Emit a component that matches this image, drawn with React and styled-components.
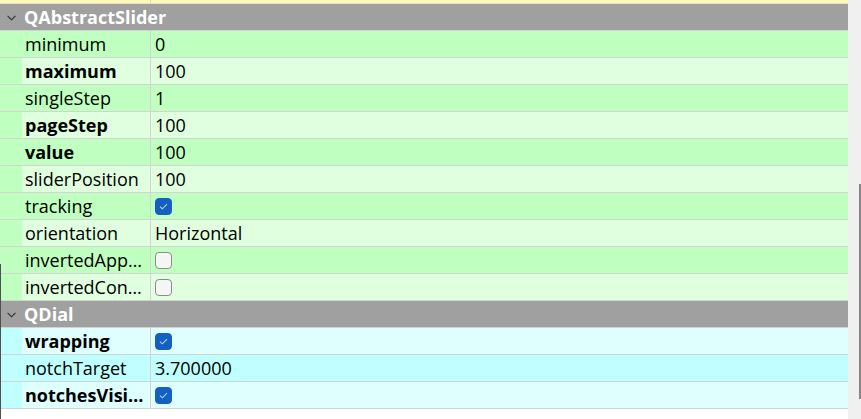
import React from "react";
import styled, { createGlobalStyle } from "styled-components";

const Global = createGlobalStyle`
  html, body { margin: 0; padding: 0; background: #ffffff; }
  body { font-family: "Open Sans", "Noto Sans", "Liberation Sans", sans-serif; }
`;

const Page = styled.div`
  position: relative;
  display: flex;
  width: 861px;
  height: 419px;
  overflow: hidden;
  background: #ffffff;
`;

const EdgeLine = styled.div`
  position: absolute;
  left: 0;
  top: 264px;
  width: 1px;
  bottom: 0;
  background: #505050;
`;

const Tree = styled.div`
  width: 848px;
  display: flex;
  flex-direction: column;
`;

const ScrollTrack = styled.div`
  width: 13px;
  background: #f0f0f0;
  display: flex;
  flex-direction: column;
  align-items: flex-end;
  padding-top: 184px;
  box-sizing: border-box;
`;

const Thumb = styled.div`
  width: 2px;
  height: 215px;
  background: #868686;
`;

const TopStrip = styled.div`
  height: 3px;
  display: grid;
  grid-template-columns: 151px 1fr;
  background: #fff8b4;
  border-bottom: 1px solid #e4e4d0;
`;

const StripCell = styled.div`
  border-right: ${(p) => (p.$divider ? "1px solid #d8d8c0" : "none")};
`;

const GroupHeader = styled.div`
  height: 26px;
  display: flex;
  align-items: center;
  gap: 8px;
  padding-left: 7px;
  background: #a0a0a0;
  border-bottom: 1px solid #d3d3d3;
  border-left: 1px solid #6a6a6a;
  box-sizing: content-box;
  color: #ffffff;
  font-weight: 700;
  font-size: 18px;
  line-height: 26px;
  margin-left: -1px;
`;

const Chevron = styled.svg`
  width: 9px;
  height: 6px;
  flex: none;
  margin-top: 2px;
`;

const Row = styled.div`
  height: 26px;
  display: grid;
  grid-template-columns: 22px 128px 1px 1fr;
  border-bottom: 1px solid #d3d3d3;
  background: ${(p) => p.$bg};
`;

const Branch = styled.div`
  background: ${(p) => p.$bg};
`;

const NameCell = styled.div`
  padding-left: 3px;
  font-size: 18px;
  line-height: 26px;
  font-weight: ${(p) => (p.$bold ? 700 : 400)};
  color: #000000;
  white-space: nowrap;
  overflow: hidden;
`;

const Divider = styled.div`
  background: #d3d3d3;
`;

const ValueCell = styled.div`
  padding-left: 4px;
  font-size: 18px;
  line-height: 26px;
  color: #000000;
  white-space: nowrap;
  display: flex;
  align-items: center;
`;

const Box = styled.div`
  width: 17px;
  height: 17px;
  box-sizing: border-box;
  border-radius: 4px;
  display: flex;
  align-items: center;
  justify-content: center;
  background: ${(p) => (p.$checked ? "#135fc2" : "#f5f5f5")};
  border: 1px solid ${(p) => (p.$checked ? "#135fc2" : "#8c8c8c")};
`;

const Check = styled.svg`
  width: 9px;
  height: 7px;
`;

const CheckBox = ({ checked }) => (
  <Box $checked={checked}>
    {checked && (
      <Check viewBox="0 0 9 7">
        <path d="M1 3.6 L3.4 5.8 L8 1.2" fill="none" stroke="#b9d3f2" strokeWidth="1.1" />
      </Check>
    )}
  </Box>
);

const palettes = {
  green: { dark: "#bfffbf", light: "#dfffdf" },
  cyan: { dark: "#bfffff", light: "#dfffff" },
};

const groups = [
  {
    title: "QAbstractSlider",
    palette: "green",
    startDark: true,
    rows: [
      { name: "minimum", value: "0" },
      { name: "maximum", value: "100", bold: true },
      { name: "singleStep", value: "1" },
      { name: "pageStep", value: "100", bold: true },
      { name: "value", value: "100", bold: true },
      { name: "sliderPosition", value: "100" },
      { name: "tracking", check: true },
      { name: "orientation", value: "Horizontal" },
      { name: "invertedApp…", check: false },
      { name: "invertedCon…", check: false },
    ],
  },
  {
    title: "QDial",
    palette: "cyan",
    startDark: false,
    rows: [
      { name: "wrapping", check: true, bold: true },
      { name: "notchTarget", value: "3.700000" },
      { name: "notchesVisi…", check: true, bold: true },
    ],
  },
];

export default function App() {
  return (
    <>
      <Global />
      <Page>
        <Tree>
          <TopStrip>
            <StripCell $divider />
            <StripCell />
          </TopStrip>
          {groups.map((g) => {
            const pal = palettes[g.palette];
            return (
              <React.Fragment key={g.title}>
                <GroupHeader>
                  <Chevron viewBox="0 0 9 6">
                    <path d="M0.6 0.8 L4.5 4.8 L8.4 0.8" fill="none" stroke="#2a2a2a" strokeWidth="1.1" />
                  </Chevron>
                  <span>{g.title}</span>
                </GroupHeader>
                {g.rows.map((r, i) => {
                  const dark = g.startDark ? i % 2 === 0 : i % 2 === 1;
                  return (
                    <Row key={r.name} $bg={dark ? pal.dark : pal.light}>
                      <Branch $bg={pal.dark} />
                      <NameCell $bold={r.bold}>{r.name}</NameCell>
                      <Divider />
                      <ValueCell>
                        {"check" in r ? <CheckBox checked={r.check} /> : r.value}
                      </ValueCell>
                    </Row>
                  );
                })}
              </React.Fragment>
            );
          })}
        </Tree>
        <ScrollTrack>
          <Thumb />
        </ScrollTrack>
        <EdgeLine />
      </Page>
    </>
  );
}
